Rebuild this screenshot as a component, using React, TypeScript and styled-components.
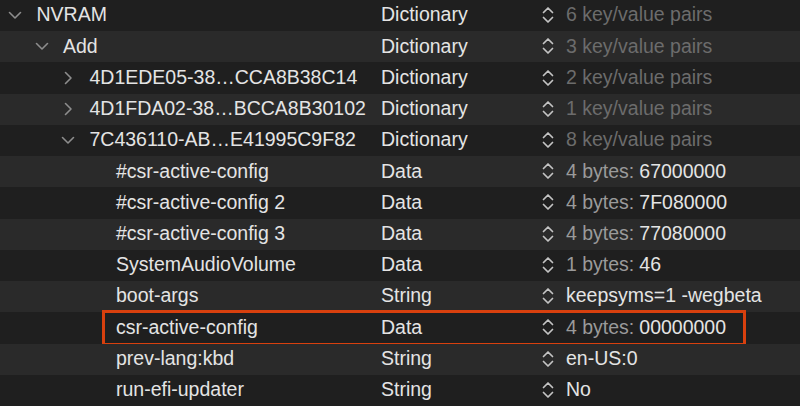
import React from "react";
import styled, { createGlobalStyle } from "styled-components";

type Entry = {
  level: number;
  name: string;
  type: string;
  disclosure?: "open" | "closed";
  count?: number;
  prefix?: string;
  value?: string;
  marked?: boolean;
};

const entries: Entry[] = [
  { level: 0, name: "NVRAM", type: "Dictionary", disclosure: "open", count: 6 },
  { level: 1, name: "Add", type: "Dictionary", disclosure: "open", count: 3 },
  { level: 2, name: "4D1EDE05-38…CCA8B38C14", type: "Dictionary", disclosure: "closed", count: 2 },
  { level: 2, name: "4D1FDA02-38…BCCA8B30102", type: "Dictionary", disclosure: "closed", count: 1 },
  { level: 2, name: "7C436110-AB…E41995C9F82", type: "Dictionary", disclosure: "open", count: 8 },
  { level: 3, name: "#csr-active-config", type: "Data", prefix: "4 bytes:", value: "67000000" },
  { level: 3, name: "#csr-active-config 2", type: "Data", prefix: "4 bytes:", value: "7F080000" },
  { level: 3, name: "#csr-active-config 3", type: "Data", prefix: "4 bytes:", value: "77080000" },
  { level: 3, name: "SystemAudioVolume", type: "Data", prefix: "1 bytes:", value: "46" },
  { level: 3, name: "boot-args", type: "String", value: "keepsyms=1 -wegbeta" },
  { level: 3, name: "csr-active-config", type: "Data", prefix: "4 bytes:", value: "00000000", marked: true },
  { level: 3, name: "prev-lang:kbd", type: "String", value: "en-US:0" },
  { level: 3, name: "run-efi-updater", type: "String", value: "No" },
];

const GlobalStyle = createGlobalStyle`
  html, body {
    margin: 0;
    padding: 0;
    background: #1f1f1f;
  }
  body {
    font-family: "Liberation Sans", Arial, sans-serif;
    -webkit-font-smoothing: antialiased;
  }
`;

const Outline = styled.div`
  width: 800px;
  height: 406px;
  display: grid;
  grid-template-rows: repeat(13, 1fr);
  overflow: hidden;
  background: #1f1f1f;
`;

const Row = styled.div<{ $alt: boolean }>`
  position: relative;
  display: grid;
  grid-template-columns: 381px 160px 1fr;
  align-items: center;
  background: ${(p) => (p.$alt ? "#2a2a2a" : "#1f1f1f")};
  color: #e4e4e4;
  font-size: 19.5px;
  line-height: 1;
  white-space: nowrap;
`;

const KeyCell = styled.div<{ $level: number }>`
  display: flex;
  align-items: center;
  padding-left: ${(p) => 8 + p.$level * 26.5}px;
  margin-top: -1px;
`;

const Disclosure = styled.span`
  width: 28.5px;
  height: 14px;
  display: flex;
  align-items: center;
  flex-shrink: 0;
`;

const TypeCell = styled.div`
  margin-top: -1px;
`;

const ValueCell = styled.div`
  display: flex;
  align-items: center;
  margin-top: -1px;
`;

const Stepper = styled.svg`
  width: 14px;
  height: 18px;
  margin-right: 11px;
  flex-shrink: 0;
`;

const Muted = styled.span`
  color: #6c6c6c;
`;

const Prefix = styled.span`
  color: #9a9a9a;
  margin-right: 5px;
`;

const Marker = styled.div`
  position: absolute;
  left: 102px;
  right: 54px;
  top: -2px;
  bottom: -2px;
  border: 3.5px solid #d8400e;
  pointer-events: none;
`;

const Chevron: React.FC<{ open: boolean }> = ({ open }) => (
  <svg width="14" height="14" viewBox="0 0 14 14" fill="none">
    {open ? (
      <path d="M1.5 4.5 L7 10 L12.5 4.5" stroke="#8d8d8d" strokeWidth="1.6" strokeLinecap="round" strokeLinejoin="round" />
    ) : (
      <path d="M4.5 1.5 L10 7 L4.5 12.5" stroke="#8d8d8d" strokeWidth="1.6" strokeLinecap="round" strokeLinejoin="round" />
    )}
  </svg>
);

const StepperIcon = () => (
  <Stepper viewBox="0 0 14 18" fill="none">
    <path d="M2.5 6.5 L7 2 L11.5 6.5" stroke="#c4c4c4" strokeWidth="1.7" strokeLinecap="round" strokeLinejoin="round" />
    <path d="M2.5 11.5 L7 16 L11.5 11.5" stroke="#c4c4c4" strokeWidth="1.7" strokeLinecap="round" strokeLinejoin="round" />
  </Stepper>
);

export default function App() {
  return (
    <>
      <GlobalStyle />
      <Outline>
        {entries.map((e, i) => (
          <Row key={i} $alt={i % 2 === 1}>
            <KeyCell $level={e.level}>
              <Disclosure>{e.disclosure && <Chevron open={e.disclosure === "open"} />}</Disclosure>
              {e.name}
            </KeyCell>
            <TypeCell>{e.type}</TypeCell>
            <ValueCell>
              <StepperIcon />
              {e.count !== undefined ? (
                <Muted>{e.count} key/value pairs</Muted>
              ) : (
                <span>
                  {e.prefix && <Prefix>{e.prefix}</Prefix>}
                  {e.value}
                </span>
              )}
            </ValueCell>
            {e.marked && <Marker />}
          </Row>
        ))}
      </Outline>
    </>
  );
}
